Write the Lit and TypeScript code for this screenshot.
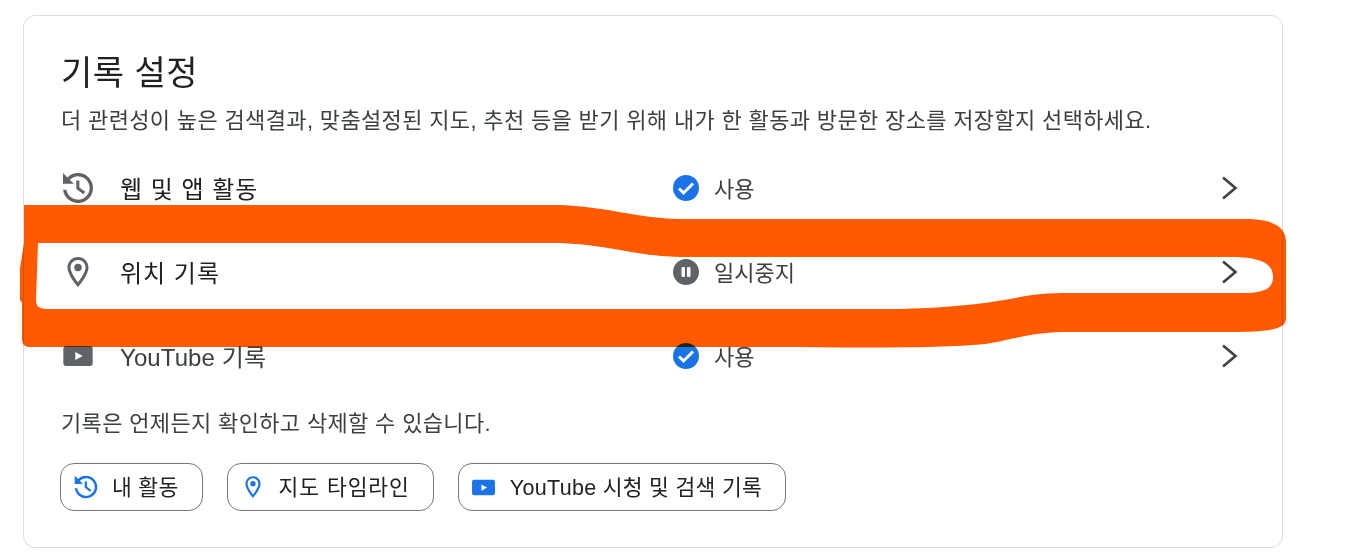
import { LitElement, html, css, svg } from 'lit';
import { customElement } from 'lit/decorators.js';

const historyIcon = svg`<path d="M12 3a9 9 0 1 1-8.95 10h2.02A7 7 0 1 0 7.05 7.05L9.5 9.5H3V3l2.64 2.64A8.97 8.97 0 0 1 12 3z"/><path d="M11 7.5h1.8v4.2l3.5 2.6-1.05 1.45L11 12.6z"/>`;
const pinIcon = svg`<path d="M12 2C8.13 2 5 5.13 5 9c0 5.25 7 13 7 13s7-7.75 7-13c0-3.87-3.13-7-7-7zm0 2c2.76 0 5 2.24 5 5 0 2.88-2.88 7.19-5 9.88C9.92 16.21 7 11.85 7 9c0-2.76 2.24-5 5-5z"/><circle cx="12" cy="9" r="2.5"/>`;
const youtubeIcon = svg`<path fill-rule="evenodd" d="M3 4.500h18A2 2 0 0 1 23 6.500v11a2 2 0 0 1-2 2H3a2 2 0 0 1-2-2v-11a2 2 0 0 1 2-2zM10 9v6l5.500-3z"/>`;

@customElement('app-root')
export class AppRoot extends LitElement {
  static styles = css`
    :host {
      display: block;
      position: relative;
      height: 553px;
      overflow: hidden;
      background: #fff;
      font-family: 'Liberation Sans', 'Noto Sans CJK KR', sans-serif;
      color: #202124;
    }

    .card {
      box-sizing: border-box;
      width: 1260px;
      height: 533px;
      margin: 15px 0 0 23px;
      padding: 33px 36px 0 37px;
      border: 1px solid #dadce0;
      border-radius: 12px;
    }

    h1 {
      margin: 0;
      font-size: 34px;
      line-height: 48px;
      font-weight: 400;
      letter-spacing: 0.5px;
    }

    .desc {
      margin: 9px 0 0;
      font-size: 22px;
      line-height: 30px;
      letter-spacing: 0.35px;
      color: #3c4043;
    }

    .rows {
      margin-top: 9px;
    }

    .row {
      display: grid;
      grid-template-columns: 59px 553px 1fr 24px;
      align-items: center;
      height: 84px;
    }

    .row-icon {
      display: flex;
      justify-content: center;
      width: 34px;
      margin-top: 2px;
      fill: #5f6368;
    }

    .row-icon svg,
    .link-icon svg {
      flex: none;
    }

    .label {
      font-size: 24px;
      letter-spacing: 1px;
    }

    .label.muted {
      letter-spacing: 0.1px;
      color: #3c4043;
    }

    .status {
      display: flex;
      align-items: center;
      gap: 15px;
      font-size: 22px;
      color: #3c4043;
    }

    .status svg {
      margin-top: 2px;
    }

    .chevron {
      fill: none;
      stroke: #3c4043;
      stroke-width: 2.6;
    }

    .note {
      margin: 12px 0 0;
      font-size: 22px;
      line-height: 30px;
      letter-spacing: 0.35px;
      color: #3c4043;
    }

    .links {
      display: flex;
      gap: 24px;
      margin: 24px 0 0 -1px;
    }

    .link {
      display: flex;
      align-items: center;
      box-sizing: border-box;
      height: 48px;
      padding: 0 23px 0 13px;
      border: 1px solid #747775;
      border-radius: 14px;
      font-size: 21.5px;
      letter-spacing: 0.3px;
      fill: #1a73e8;
    }

    .link.wide {
      letter-spacing: 0.95px;
    }

    .link-text {
      margin-bottom: 3px;
    }

    .link-icon {
      display: flex;
      justify-content: center;
      width: 24px;
      margin-right: 14px;
    }

    .scribble {
      position: absolute;
      left: 0;
      top: 0;
      mix-blend-mode: multiply;
      pointer-events: none;
    }
  `;

  private rows = [
    { icon: historyIcon, size: 40, label: '웹 및 앱 활동', status: '사용', on: true },
    { icon: pinIcon, size: 36, label: '위치 기록', status: '일시중지', on: false },
    { icon: youtubeIcon, size: 32, label: 'YouTube 기록', status: '사용', on: true, muted: true },
  ];

  private links = [
    { icon: historyIcon, size: 30, label: '내 활동' },
    { icon: pinIcon, size: 26, label: '지도 타임라인', wide: true },
    { icon: youtubeIcon, size: 25, label: 'YouTube 시청 및 검색 기록' },
  ];

  private statusIcon(on: boolean) {
    return on
      ? html`<svg width="26" height="26" viewBox="0 0 26 26">
          <circle cx="13" cy="13" r="13" fill="#1a73e8" />
          <path d="M6 13.500l4.500 4.500 9.500-9.500" fill="none" stroke="#fff" stroke-width="3" />
        </svg>`
      : html`<svg width="26" height="26" viewBox="0 0 26 26">
          <circle cx="13" cy="13" r="13" fill="#5f6368" />
          <rect x="8.500" y="8" width="3.500" height="10" rx="1" fill="#fff" />
          <rect x="14" y="8" width="3.500" height="10" rx="1" fill="#fff" />
        </svg>`;
  }

  render() {
    return html`
      <section class="card">
        <h1>기록 설정</h1>
        <p class="desc">더 관련성이 높은 검색결과, 맞춤설정된 지도, 추천 등을 받기 위해 내가 한 활동과 방문한 장소를 저장할지 선택하세요.</p>
        <div class="rows">
          ${this.rows.map(
            (r) => html`
              <div class="row">
                <span class="row-icon">
                  <svg width=${r.size} height=${r.size} viewBox="0 0 24 24">${r.icon}</svg>
                </span>
                <span class="label ${r.muted ? 'muted' : ''}">${r.label}</span>
                <span class="status">${this.statusIcon(r.on)}${r.status}</span>
                <svg class="chevron" width="24" height="32" viewBox="0 0 24 32">
                  <path d="M1 6.500L13.500 17 1 27.500" />
                </svg>
              </div>
            `,
          )}
        </div>
        <p class="note">기록은 언제든지 확인하고 삭제할 수 있습니다.</p>
        <div class="links">
          ${this.links.map(
            (l) => html`
              <a class="link ${l.wide ? 'wide' : ''}">
                <span class="link-icon">
                  <svg width=${l.size} height=${l.size} viewBox="0 0 24 24">${l.icon}</svg>
                </span>
                <span class="link-text">${l.label}</span>
              </a>
            `,
          )}
        </div>
      </section>
      <svg class="scribble" width="1357" height="553" viewBox="0 0 1357 553">
        <path
          fill="#ff5a00"
          fill-rule="evenodd"
          d="M24 205 H560 C610 207 635 218 680 219 L1250 219 C1272 220 1286 226 1286 242 L1286 318 C1286 328 1276 331 1240 332 L1060 332
             C1030 333 1005 341 985 344 C940 348 880 348 800 347 L30 347 C24 347 22 344 22 338 L22 303 L20 300 L20 268 L24 243 Z
             M38 243 L36 300 C36 307 40 309 48 309 L880 309 C940 309 985 304 1020 297 C1040 293 1055 293 1080 293 L1240 293
             C1262 293 1273 290 1273 277 C1273 264 1262 258 1236 257 L680 257 C635 256 610 245 560 243 Z"
        />
      </svg>
    `;
  }
}
